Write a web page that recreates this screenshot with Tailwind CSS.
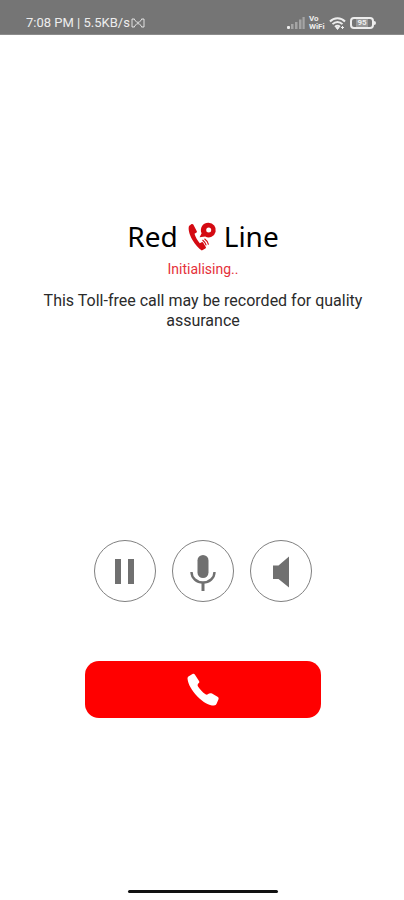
<!DOCTYPE html>
<html lang="en">
<head>
<meta charset="utf-8">
<meta name="viewport" content="width=device-width, initial-scale=1">
<title>Red Line</title>
<script src="https://cdn.jsdelivr.net/npm/@tailwindcss/browser@4"></script>
</head>
<body class="bg-white font-[Roboto,sans-serif]">
<div class="flex min-h-screen flex-col">
  <header class="flex h-[35px] items-end justify-between border-b border-[#8c8c8c] bg-[#757575] pr-7 pb-[3px] pl-[26px] text-[#ededed]">
    <div class="flex items-center gap-px">
      <span class="text-[13px] leading-4">7:08 PM | 5.5KB/s</span>
      <svg class="h-[10px] w-[14px]" viewBox="0 0 14 10" fill="none" stroke="currentColor" stroke-width=".9" aria-hidden="true"><path d="M3.500 1H1v8h2.500M10.500 1H13v8h-2.500M3 1l2.500 3M3 9l2.500-3M11 1L8.500 4M11 9L8.500 6"/><circle cx="7" cy="5" r="1"/></svg>
    </div>
    <div class="flex items-center gap-1">
      <svg class="h-3 w-[18px]" viewBox="0 0 18 12" fill="currentColor" aria-hidden="true"><rect x="0" y="9" width="3" height="3" rx="1"/><g opacity=".4"><rect x="4" y="7" width="2.500" height="5"/><rect x="8" y="5" width="2.500" height="7"/><rect x="12" y="2.500" width="2.500" height="9.500"/><rect x="15.500" y="0" width="2.200" height="12"/></g></svg>
      <span class="flex w-4 flex-col text-[8px] leading-[8px] font-bold"><span>Vo</span><span>WiFi</span></span>
      <svg class="h-[13px] w-[17px]" viewBox="0 0 17 13" fill="none" stroke="currentColor" stroke-width="1.900" aria-hidden="true"><path d="M1 4.500C5 .2 12 .2 16 4.500M3.500 7.200c3-3 7-3 10 0M6 9.800c1.500-1.500 3.500-1.500 5 0"/><path d="M7 10.500h3L8.500 12.500zM13.500 9v3M12 10.500h3" fill="currentColor" stroke-width="1"/></svg>
      <span class="flex items-center">
        <span class="flex h-3 w-6 items-center justify-center rounded-[4px] border-2 border-[#ededed] text-[8px] leading-[8px] font-bold"><span class="bg-[#999999] px-px">95</span></span>
        <span class="h-1 w-[2px] rounded-r bg-[#ededed]"></span>
      </span>
    </div>
  </header>

  <main class="flex flex-1 flex-col items-center pt-[182px] pl-[2px]">
    <h1 class="flex items-center gap-2 font-['Noto_Sans',sans-serif] text-[28px] leading-[38px] text-black">
      <span>Red</span>
      <svg class="h-[29px] w-[30px] overflow-visible" viewBox="-1 0 30 29" aria-hidden="true">
        <path fill="#d40a12" d="M4.600 2.100 2 4C.9 7.200 2.400 12.500 5.300 17.700c2.900 5 6.500 9.100 9.500 10.700l3.600-2c.6-.3.700-.9.400-1.400l-2.700-4.400c-.3-.5-.9-.7-1.400-.4l-1.900 1.100c-2.400-2.700-4.300-6-5.300-9.500l2-1.200c.5-.3.600-.8.300-1.300L6.300 2.500c-.4-.6-1.100-.8-1.700-.4z"/>
        <path fill="#d40a12" fill-rule="evenodd" d="M21.500 .8a7.300 7.300 0 1 1-3.300 13.800L12.600 15.200l2-3.900A7.300 7.300 0 0 1 21.500 .8zm.2 4.800a2.500 2.500 0 1 0 0 5 2.500 2.500 0 0 0 0-5z"/>
        <path fill="none" stroke="#d40a12" stroke-width="1.200" d="M15.500 18c1.700 1.300 3 3.200 3.700 5.400M17.500 16.800c2 1.400 3.300 3.400 4 5.800"/>
      </svg>
      <span>Line</span>
    </h1>
    <p role="status" class="mt-1 text-[14px] leading-5 text-[#e5303a]">Initialising..</p>
    <p class="mt-3 px-8 text-center text-[16px] leading-5 text-[#2b2b2b]">This Toll-free call may be recorded for quality assurance</p>

    <div class="mt-[209px] flex gap-4 text-[#707070]">
      <button type="button" aria-label="Hold" class="flex size-[62px] items-center justify-center rounded-full border border-[#808080]">
        <svg class="size-9" viewBox="0 0 36 36" fill="currentColor" aria-hidden="true"><path d="M8 6h6v25H8zM21 6h6v25h-6z"/></svg>
      </button>
      <button type="button" aria-label="Mute" class="flex size-[62px] items-center justify-center rounded-full border border-[#808080]">
        <svg class="size-9 overflow-visible" viewBox="0 0 36 36" fill="none" stroke="currentColor" aria-hidden="true"><rect x="12.500" y="2" width="11" height="23" rx="5.500" fill="currentColor" stroke="none"/><path d="M6.500 19c0 6 5 10.500 11.500 10.500S29.500 25 29.500 19" stroke-width="2.400"/><path d="M18 29v9" stroke-width="3"/></svg>
      </button>
      <button type="button" aria-label="Speaker" class="flex size-[62px] items-center justify-center rounded-full border border-[#808080]">
        <svg class="size-9" viewBox="0 0 36 36" fill="currentColor" aria-hidden="true"><path d="M10 12.500h5.500L26 3.500v31L15.500 26H10z"/></svg>
      </button>
    </div>

    <button type="button" aria-label="End call" class="mt-[59px] flex h-[57px] w-[236px] items-center justify-center rounded-[14px] bg-[#ff0000]">
      <svg class="h-[34px] w-8" viewBox="0 0 32 34" fill="#fff" aria-hidden="true"><path d="M1.800 3.200 5.500 1c1-.5 1.700-.3 2.300.5l4.200 6.400c.5.800.4 1.500-.2 2.100-1.200 1.100-1.600 2.200-.8 3.500 2.200 3.200 4.500 5.800 7.500 7.800.9.600 1.800.5 2.600-.2 1.100-1 2.600-1.200 3.900-.5l5.500 3.100c1 .6 1.400 1.400 1 2.500l-1.800 4.400c-.5 1.200-1.400 1.900-2.700 1.900-4.600.1-11-3.300-16.600-9.100C4.800 17.700 1.200 11.500.6 6.300.4 4.900.7 3.900 1.800 3.200z"/></svg>
    </button>
  </main>

  <footer class="flex justify-center pb-[7px] pl-[2px]">
    <div class="h-[3px] w-[150px] rounded-full bg-[#111111]"></div>
  </footer>
</div>
</body>
</html>
